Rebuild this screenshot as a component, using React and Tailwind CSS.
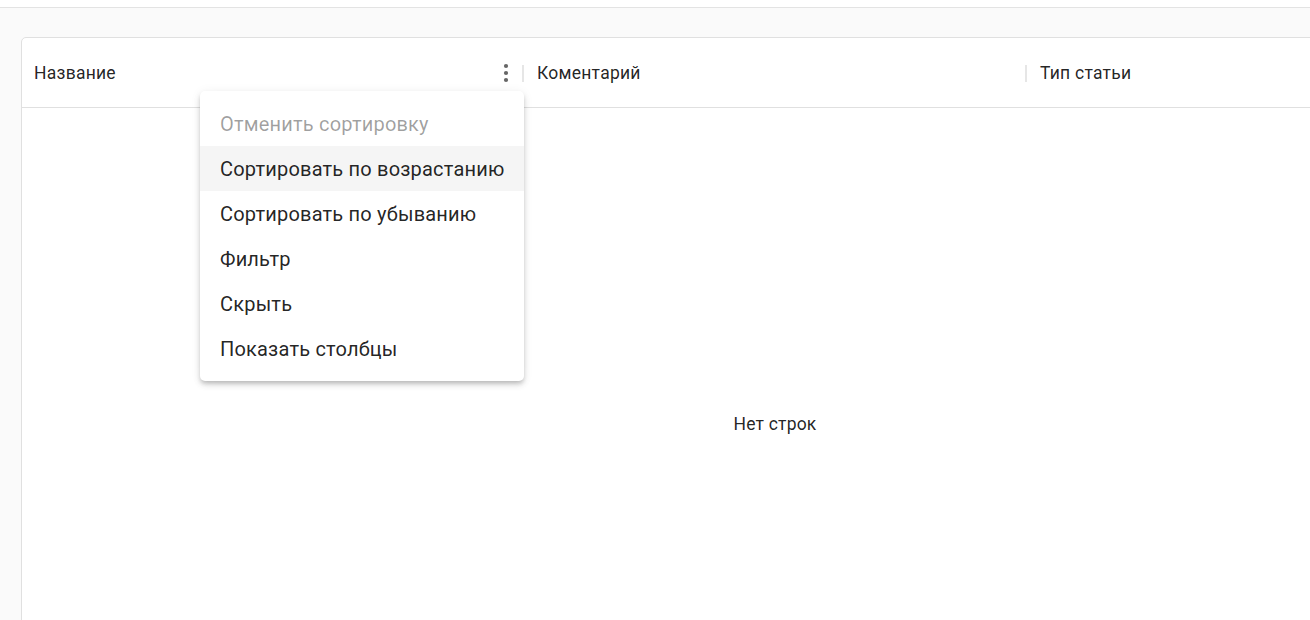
import React from "react";

function Dots() {
  return (
    <svg width="8" height="22" viewBox="0 0 8 22" className="text-[#666]">
      <circle cx="4" cy="4" r="2.1" fill="currentColor" />
      <circle cx="4" cy="11" r="2.1" fill="currentColor" />
      <circle cx="4" cy="18" r="2.1" fill="currentColor" />
    </svg>
  );
}

function Sep() {
  return <div className="w-[2px] h-[17px] bg-[#e6e6e6]" />;
}

export default function App() {
  const items = [
    { t: "Отменить сортировку", disabled: true },
    { t: "Сортировать по возрастанию", hover: true },
    { t: "Сортировать по убыванию" },
    { t: "Фильтр" },
    { t: "Скрыть" },
    { t: "Показать столбцы" },
  ];
  return (
    <div
      className="relative w-[1310px] h-[620px] overflow-hidden bg-[#fafafa]"
      style={{ fontFamily: "Roboto, 'Liberation Sans', sans-serif" }}
    >
      <div className="h-[8px] bg-white border-b border-[#e3e3e3]" />
      <div className="pt-[29px] pl-[21px]">
        <div className="w-[1508px] h-[700px] bg-white border border-[#e0e0e0] rounded-[5px] flex flex-col">
          <div className="h-[70px] pt-[2px] border-b border-[#e0e0e0] flex items-center text-[17.5px] tracking-[0.25px] text-[rgba(0,0,0,0.87)]">
            <div className="w-[502px] flex items-center pl-[12px] pr-0">
              <span className="flex-1">Название</span>
              <div className="mr-[12px] flex items-center -mt-[2px]">
                <Dots />
              </div>
              <Sep />
            </div>
            <div className="w-[503px] flex items-center pl-[13px]">
              <span className="flex-1">Коментарий</span>
              <Sep />
            </div>
            <div className="flex items-center pl-[13px]">
              <span>Тип статьи</span>
            </div>
          </div>
          <div className="flex-1 flex items-start justify-center pt-[303px] text-[17.5px] tracking-[0.2px] text-[rgba(0,0,0,0.87)]">
            Нет строк
          </div>
        </div>
      </div>

      <div className="absolute left-[200px] top-[91px] w-[324px] bg-white rounded-[5px] py-[10px] shadow-[0_3px_4px_-1px_rgba(0,0,0,0.18),0_4px_7px_0_rgba(0,0,0,0.1),0_1px_12px_0_rgba(0,0,0,0.06)]">
        {items.map((it) => (
          <div
            key={it.t}
            className={
              "h-[45px] flex items-center px-[20px] text-[20px] tracking-[0.19px] whitespace-nowrap " +
              (it.disabled
                ? "text-[rgba(0,0,0,0.38)] "
                : "text-[rgba(0,0,0,0.87)] ") +
              (it.hover ? "bg-[#f5f5f5]" : "")
            }
          >
            {it.t}
          </div>
        ))}
      </div>
    </div>
  );
}
